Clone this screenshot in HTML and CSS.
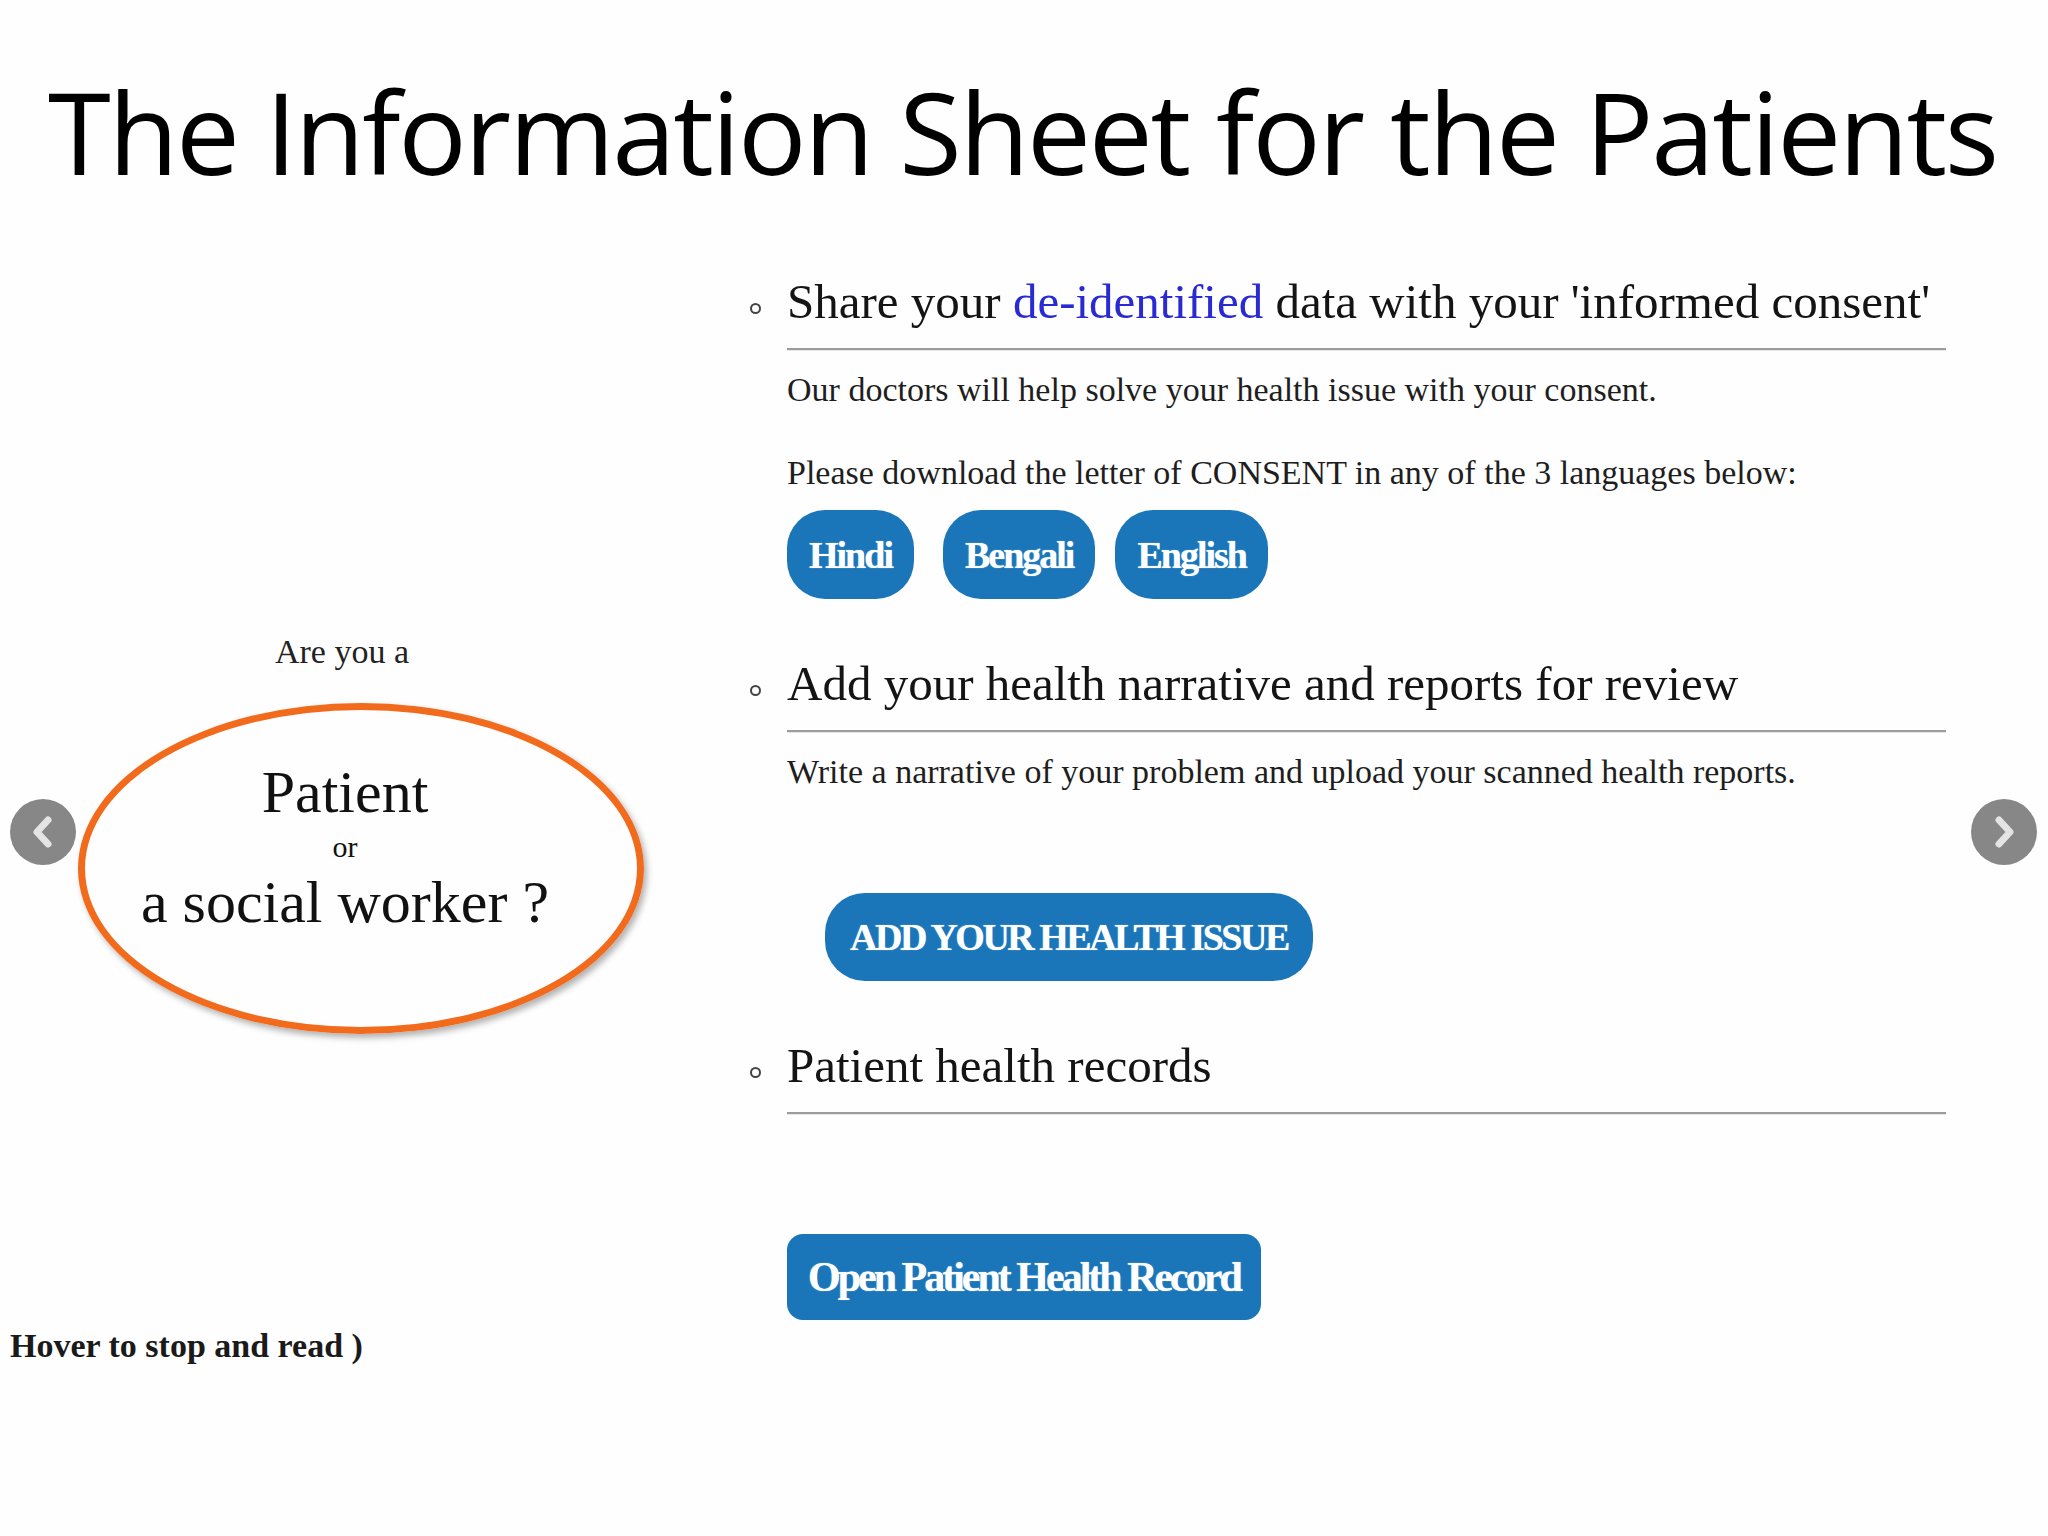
FILE: index.html
```html
<!DOCTYPE html>
<html lang="en">
<head>
<meta charset="utf-8">
<title>The Information Sheet for the Patients</title>
<link rel="stylesheet" href="styles.css">
</head>
<body>
<h1 class="title">The Information Sheet for the Patients</h1>
<main class="stage">
  <section class="intro">
    <p class="intro-ask">Are you a</p>
    <div class="role">
      <p class="role-main">Patient</p>
      <p class="role-or">or</p>
      <p class="role-main">a social worker ?</p>
    </div>
    <p class="hover-note">Hover to stop and read )</p>
  </section>

  <ul class="steps">
    <li class="step">
      <span class="dot"></span>
      <div class="step-body">
        <h2 class="step-title">Share your <a class="link" href="#">de-identified</a> data with your 'informed consent'</h2>
        <hr class="rule">
        <p class="step-text">Our doctors will help solve your health issue with your consent.</p>
        <p class="step-text step-text-gap">Please download the letter of CONSENT in any of the 3 languages below:</p>
        <div class="lang-row">
          <a class="btn lang-btn" href="#">Hindi</a>
          <a class="btn lang-btn" href="#">Bengali</a>
          <a class="btn lang-btn" href="#">English</a>
        </div>
      </div>
    </li>
    <li class="step">
      <span class="dot"></span>
      <div class="step-body">
        <h2 class="step-title">Add your health narrative and reports for review</h2>
        <hr class="rule">
        <p class="step-text">Write a narrative of your problem and upload your scanned health reports.</p>
        <div class="cta-row">
          <a class="btn cta-btn" href="#">ADD YOUR HEALTH ISSUE</a>
        </div>
      </div>
    </li>
    <li class="step">
      <span class="dot"></span>
      <div class="step-body">
        <h2 class="step-title">Patient health records</h2>
        <hr class="rule">
        <div class="record-row">
          <a class="btn record-btn" href="#">Open Patient Health Record</a>
        </div>
      </div>
    </li>
  </ul>

  <div class="ring" aria-hidden="true"></div>

  <button class="nav nav-prev" type="button" aria-label="Previous">
    <svg viewBox="0 0 66 66" width="66" height="66"><path d="M38 21 L27 33 L38 45" fill="none" stroke="#e4e4e4" stroke-width="7" stroke-linecap="round" stroke-linejoin="round"/></svg>
  </button>
  <button class="nav nav-next" type="button" aria-label="Next">
    <svg viewBox="0 0 66 66" width="66" height="66"><path d="M28 21 L39 33 L28 45" fill="none" stroke="#e4e4e4" stroke-width="7" stroke-linecap="round" stroke-linejoin="round"/></svg>
  </button>
</main>
</body>
</html>
```

FILE: styles.css
```css
html, body {
  margin: 0;
  padding: 0;
  background: #fefefe;
}

body {
  width: 2048px;
  height: 1536px;
  overflow: hidden;
  font-family: "Liberation Serif", "Times New Roman", serif;
  color: #1c1c1c;
}

.title {
  margin: 0;
  padding: 61px 0 0 48px;
  height: 140px;
  font-family: "Open Sans", "Liberation Sans", sans-serif;
  font-weight: 400;
  font-size: 114px;
  line-height: 140px;
  letter-spacing: -2.3px;
  color: #000;
  white-space: nowrap;
}

.stage {
  position: relative;
  display: flex;
  height: 1335px;
}

/* left column */
.intro {
  width: 690px;
  flex: none;
  display: flex;
  flex-direction: column;
  align-items: center;
}

.intro-ask {
  margin: 431px 0 0 -6px;
  font-size: 34px;
  line-height: 40px;
  color: #222;
}

.role {
  margin-top: 85px;
  display: flex;
  flex-direction: column;
  align-items: center;
}

.role p {
  margin: 0;
  color: #111;
}

.role-main {
  font-size: 60px;
  line-height: 70px;
}

.role-or {
  font-size: 30px;
  line-height: 36px;
  margin: 2px 0 !important;
}

.hover-note {
  align-self: flex-start;
  margin: 389px 0 0 10px;
  font-size: 34px;
  line-height: 40px;
  font-weight: 700;
  color: #1a1a1a;
}

/* right column */
.steps {
  list-style: none;
  margin: 0 0 0 52px;
  padding: 73px 0 0;
  width: 1204px;
  display: flex;
  flex-direction: column;
  gap: 57px;
}

.step {
  display: grid;
  grid-template-columns: 45px 1fr;
}

.dot {
  width: 7px;
  height: 7px;
  margin: 29px 0 0 8px;
  border: 2px solid #444;
  border-radius: 50%;
}

.step-title {
  margin: 0;
  font-size: 49px;
  line-height: 56px;
  font-weight: 400;
  color: #141414;
}

.link {
  color: #2a2ad2;
  text-decoration: none;
}

.rule {
  margin: 18px 0 0;
  height: 0;
  border: 0;
  border-top: 2px solid #9c9c9c;
  border-bottom: 1px solid #e6e6e6;
}

.step-text {
  margin: 19px 0 0;
  font-size: 34px;
  line-height: 40px;
  color: #1e1e1e;
}

.step-text-gap {
  margin-top: 43px;
}

.btn {
  display: inline-flex;
  align-items: center;
  justify-content: center;
  background: #1b76b9;
  color: #fff;
  font-family: "Liberation Serif", "Times New Roman", serif;
  font-weight: 700;
  text-decoration: none;
  white-space: nowrap;
  text-shadow: 0 0 1px #bfe8ff;
}

.lang-row {
  display: flex;
  gap: 20px;
  margin-top: 17px;
}

.lang-row .lang-btn:first-child {
  margin-right: 9px;
}

.lang-btn {
  height: 89px;
  padding: 0 22px;
  border-radius: 38px;
  font-size: 38px;
  letter-spacing: -2px;
}

.cta-row {
  margin: 101px 0 0 38px;
}

.cta-btn {
  height: 88px;
  padding: 0 25px;
  border-radius: 40px;
  font-size: 38px;
  letter-spacing: -2.5px;
}

.record-row {
  margin-top: 119px;
}

.record-btn {
  height: 86px;
  padding: 0 21px;
  border-radius: 16px;
  font-size: 42px;
  letter-spacing: -3px;
}

/* annotation ellipse laid over the left column */
.ring {
  position: absolute;
  left: 78px;
  top: 502px;
  width: 552px;
  height: 317px;
  border: 7px solid #f26a1b;
  border-radius: 50%;
  box-shadow: 3px 4px 6px rgba(0, 0, 0, 0.3);
  pointer-events: none;
}

/* carousel arrows */
.nav {
  position: absolute;
  top: 598px;
  width: 66px;
  height: 66px;
  padding: 0;
  border: 0;
  border-radius: 50%;
  background: #878787;
  display: flex;
  align-items: center;
  justify-content: center;
}

.nav svg {
  display: block;
}

.nav-prev {
  left: 10px;
}

.nav-next {
  left: 1971px;
}
```
